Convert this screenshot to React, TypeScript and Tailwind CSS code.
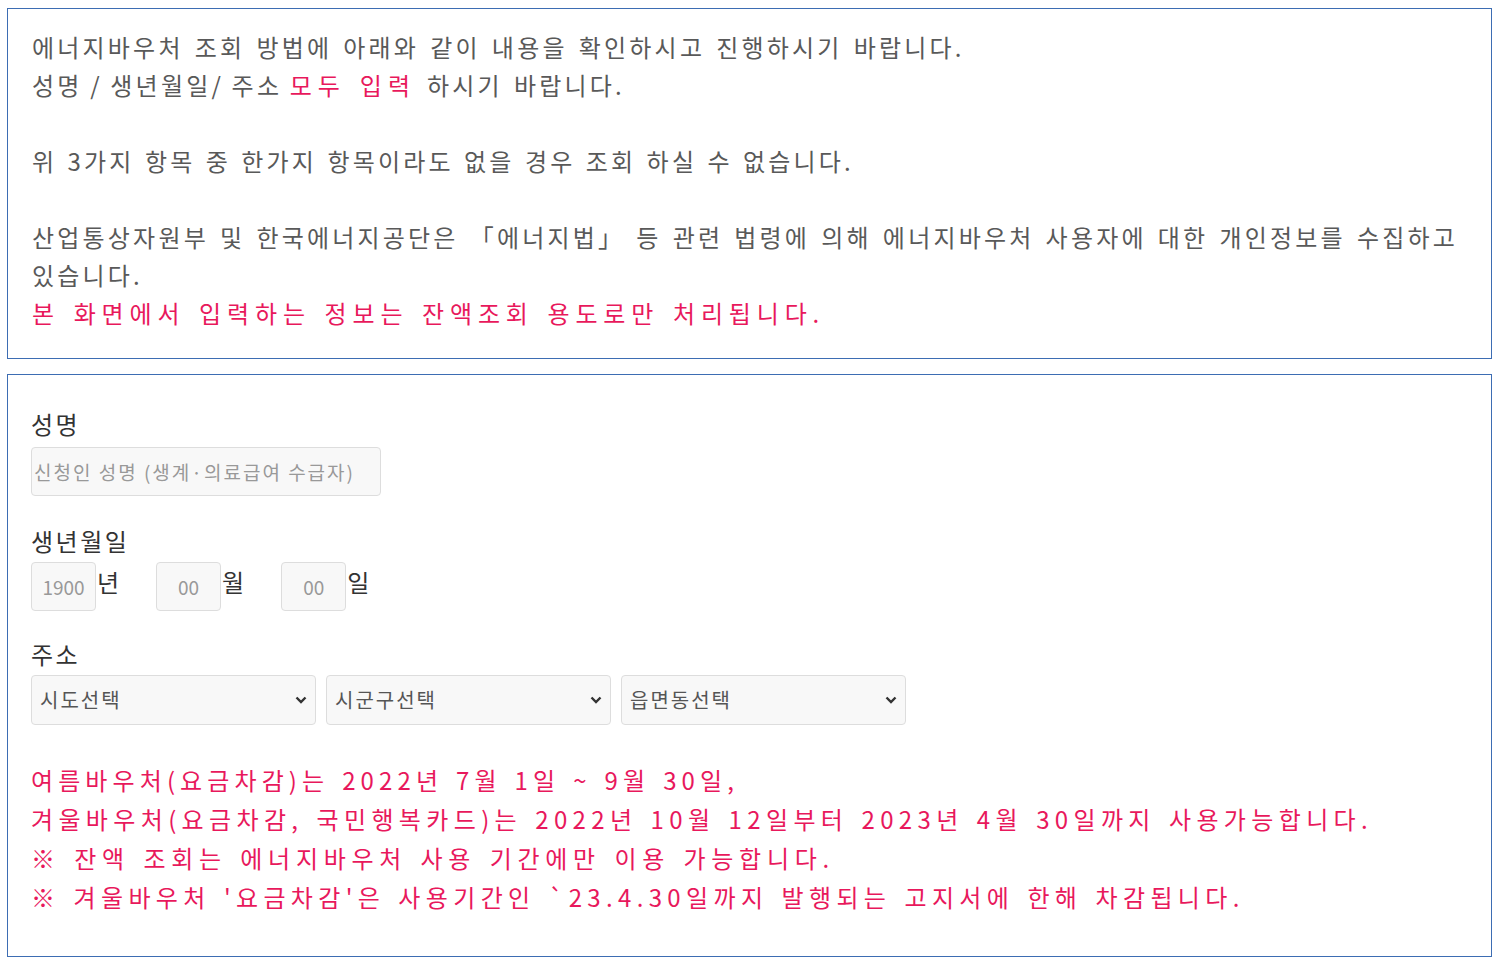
const red = 'text-[#e8185c]';

function Select({ label }: { label: string }) {
  return (
    <div className="relative w-[285px]">
      <select className="h-[50px] w-full appearance-none rounded-[4px] border border-[#dddddd] bg-[#f8f8f8] pl-[8px] text-[20px] tracking-[2px] text-[#555] outline-none">
        <option>{label}</option>
      </select>
      {/* chevron */}
      <svg
        viewBox="0 0 12 8"
        className="pointer-events-none absolute right-[9px] top-[21px] h-[8px] w-[12px]"
        fill="none"
        stroke="#333"
        strokeWidth="2.4"
      >
        <polyline points="1.5,1.5 6,6 10.5,1.5" />
      </svg>
    </div>
  );
}

function DateBox({ value, unit }: { value: string; unit: string }) {
  return (
    <div className="flex items-start">
      <input
        placeholder={value}
        className="h-[49px] w-[65px] rounded-[4px] border border-[#dddddd] bg-[#f8f8f8] text-center text-[19px] text-[#555] outline-none placeholder:text-[#999]"
      />
      <span className="ml-[1px] mt-[4px] text-[24px] leading-[32px] text-[#333]">{unit}</span>
    </div>
  );
}

export default function App() {
  return (
    <div className="min-h-screen bg-white pl-[7px] pr-[10px] pt-[8px] font-['Noto_Sans_CJK_KR','Noto_Sans',sans-serif]">
      {/* Notice */}
      <div className="w-[1485px] border border-[#3d6db3] pl-[24px] pr-[20px] pb-[26px] pt-[19px] text-[24px] leading-[38px] tracking-[3.2px] [word-spacing:2.5px] text-[#595959]">
        <p>에너지바우처 조회 방법에 아래와 같이 내용을 확인하시고 진행하시기 바랍니다.</p>
        <p>
          <span className="[word-spacing:-1px]">성명 / 생년월일/ 주소 </span>
          <span className={`${red} tracking-[6px]`}>모두 입력</span> 하시기 바랍니다.
        </p>
        <p>&nbsp;</p>
        <p className="[word-spacing:1.7px]">위 3가지 항목 중 한가지 항목이라도 없을 경우 조회 하실 수 없습니다.</p>
        <p>&nbsp;</p>
        <p>
          산업통상자원부 및 한국에너지공단은 「에너지법」 등 관련 법령에 의해 에너지바우처 사용자에 대한 개인정보를 수집하고 있습니다.
        </p>
        <p className={`${red} tracking-[5.85px]`}>본 화면에서 입력하는 정보는 잔액조회 용도로만 처리됩니다.</p>
      </div>

      {/* Form */}
      <div className="mt-[15px] w-[1485px] border border-[#3d6db3] pl-[23px] pb-[40px] pt-[32px]">
        <div className="text-[24px] leading-[34px] tracking-[2.5px] text-[#333]">성명</div>
        <input
          placeholder="신청인 성명 (생계·의료급여 수급자)"
          className="mt-[6px] h-[49px] w-[350px] rounded-[4px] border border-[#dddddd] bg-[#f8f8f8] px-[2px] text-[19px] tracking-[2px] outline-none placeholder:text-[#999]"
        />

        <div className="mt-[28px] text-[24px] leading-[34px] tracking-[2.5px] text-[#333]">생년월일</div>
        <div className="mt-[4px] flex gap-[37px]">
          <DateBox value="1900" unit="년" />
          <DateBox value="00" unit="월" />
          <DateBox value="00" unit="일" />
        </div>

        <div className="mt-[26px] text-[24px] leading-[34px] tracking-[2.5px] text-[#333]">주소</div>
        <div className="mt-[4px] flex gap-[10px]">
          <Select label="시도선택" />
          <Select label="시군구선택" />
          <Select label="읍면동선택" />
        </div>

        <div className={`mt-[35px] text-[24px] leading-[39px] tracking-[5.1px] [word-spacing:2.5px] ${red}`}>
          <p>여름바우처(요금차감)는 2022년 7월 1일 ~ 9월 30일,</p>
          <p className="tracking-[5.35px]">겨울바우처(요금차감, 국민행복카드)는 2022년 10월 12일부터 2023년 4월 30일까지 사용가능합니다.</p>
          <p className="tracking-[5.7px]">※ 잔액 조회는 에너지바우처 사용 기간에만 이용 가능합니다.</p>
          <p className="tracking-[5.35px]">※ 겨울바우처 '요금차감'은 사용기간인 `23.4.30일까지 발행되는 고지서에 한해 차감됩니다.</p>
        </div>
      </div>
    </div>
  );
}
